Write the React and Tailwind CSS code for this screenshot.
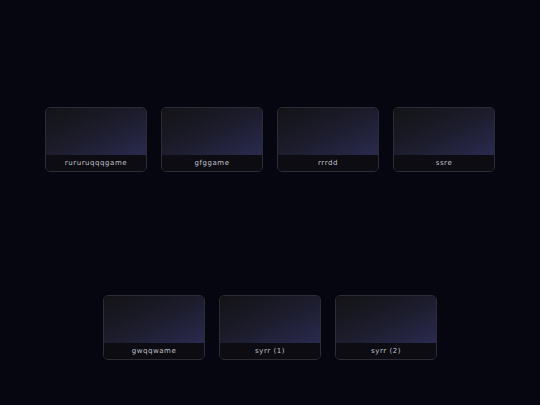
const rows = [
  ['rururuqqqgame', 'gfggame', 'rrrdd', 'ssre'],
  ['gwqqwame', 'syrr (1)', 'syrr (2)'],
];

const GameCard = ({ name }) => (
  <div className="w-[102px] h-[65px] rounded-[5px] border border-[#2c2c36] overflow-hidden flex flex-col bg-[#0c0c12]">
    <div className="flex-1 bg-gradient-to-br from-[#131316] via-[#1c1c2c] to-[#2a2a50]" />
    <div className="h-[16px] bg-[#0c0c12] flex items-center justify-center text-[7px] tracking-[0.08em] text-[#c0c0c8] font-['DejaVu_Sans',sans-serif]">
      {name}
    </div>
  </div>
);

export default function App() {
  return (
    <div className="w-full min-h-[405px] bg-[#05060f] flex flex-col items-center pt-[107px] gap-[123px]">
      {rows.map((row, i) => (
        <div key={i} className="flex gap-[14px]">
          {row.map(name => (
            <GameCard key={name} name={name} />
          ))}
        </div>
      ))}
    </div>
  );
}
